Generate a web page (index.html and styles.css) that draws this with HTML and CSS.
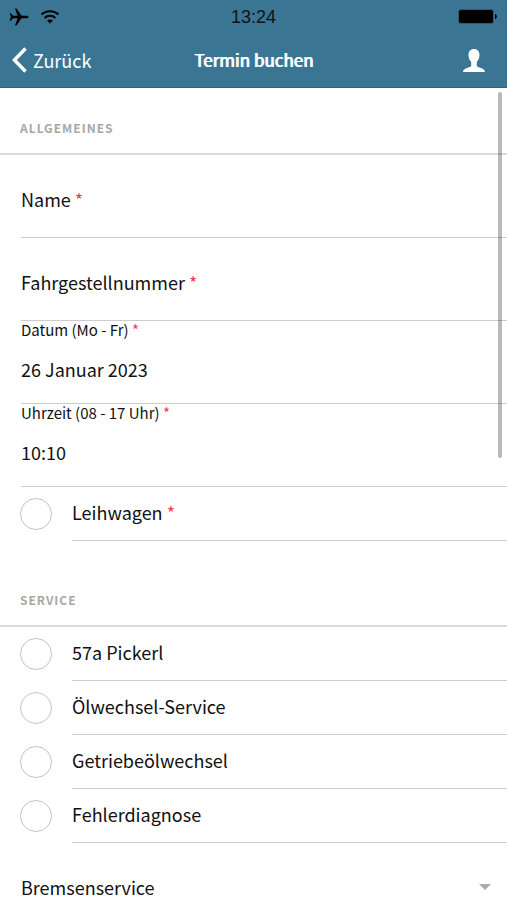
FILE: index.html
```html
<!DOCTYPE html>
<html lang="de">
<head>
    <meta charset="UTF-8">
    <meta name="viewport" content="width=device-width, initial-scale=1.0">
    <title>Termin buchen</title>
    <link rel="stylesheet" href="styles.css">
</head>
<body>
    <div class="app">
        <header class="header">
            <div class="status-bar">
                <div class="status-icons">
                    <svg width="20" height="18" viewBox="0 0 20 18"><path d="M19.5 9c0-.9-1-1.300-2-1.300h-5L7.500.6H6l2.600 7.100H4L2 5.300H.800L1.900 9 .800 12.700H2l2-2.400h4.600L6 17.400h1.500l5-7.100h5c1 0 2-.4 2-1.300z"/></svg>
                    <svg width="20" height="16" viewBox="0 0 20 16" fill="none" stroke="#000" stroke-width="2"><path d="M1.500 5.500c4.700-4.500 12.300-4.500 17 0M4.600 9c3-2.900 7.800-2.900 10.800 0"/><path d="M10 14.500l-2.800-2.800c1.600-1.500 4-1.500 5.600 0z" fill="#000" stroke="none"/></svg>
                </div>
                <span class="time">13:24</span>
                <svg class="battery" width="40" height="16" viewBox="0 0 40 16"><rect x=".5" y=".5" width="35" height="14" rx="2.500" fill="#000" stroke="#3d5763"/><path d="M37 5c2.500.6 2.500 4.400 0 5z"/></svg>
            </div>
            <nav class="nav-bar">
                <a class="back" href="#">
                    <svg width="16" height="26" viewBox="0 0 16 26" fill="none" stroke="#fff" stroke-width="3.500"><path d="M13.500 1.500L2.500 13l11 11.500"/></svg>
                    Zurück
                </a>
                <h1>Termin buchen</h1>
                <button class="profile" type="button" aria-label="Profil">
                    <svg width="22" height="23" viewBox="0 0 22 23" fill="#fff"><path d="M11 0c3.600 0 5.500 2.400 5.500 6 0 2.700-.9 5.300-2.700 6.900v3.400c0 1.200 1 1.700 2.700 2.300 2.700.9 5 1.500 5.500 4.400H0c.5-2.900 2.800-3.500 5.500-4.400 1.700-.6 2.700-1.100 2.700-2.300v-3.400C6.400 11.300 5.500 8.700 5.500 6c0-3.600 1.900-6 5.500-6z"/></svg>
                </button>
            </nav>
        </header>

        <form class="content">
            <h2>ALLGEMEINES</h2>
            <div class="field">
                <label for="name">Name <span class="required">*</span></label>
                <input id="name" type="text" required>
            </div>
            <div class="field">
                <label for="vin">Fahrgestellnummer <span class="required">*</span></label>
                <input id="vin" type="text" required>
            </div>
            <div class="field filled">
                <label for="date">Datum (Mo - Fr) <span class="required">*</span></label>
                <input id="date" type="text" value="26 Januar 2023" required>
            </div>
            <div class="field filled">
                <label for="time">Uhrzeit (08 - 17 Uhr) <span class="required">*</span></label>
                <input id="time" type="text" value="10:10" required>
            </div>
            <div class="check-row">
                <input id="rental" type="checkbox">
                <label for="rental">Leihwagen <span class="required">*</span></label>
            </div>

            <h2 class="spaced">SERVICE</h2>
            <div class="check-row">
                <input id="pickerl" type="checkbox">
                <label for="pickerl">57a Pickerl</label>
            </div>
            <div class="check-row">
                <input id="oil" type="checkbox">
                <label for="oil">Ölwechsel-Service</label>
            </div>
            <div class="check-row">
                <input id="gear-oil" type="checkbox">
                <label for="gear-oil">Getriebeölwechsel</label>
            </div>
            <div class="check-row">
                <input id="diagnosis" type="checkbox">
                <label for="diagnosis">Fehlerdiagnose</label>
            </div>
            <div class="select-row">
                <select aria-label="Bremsenservice">
                    <option>Bremsenservice</option>
                </select>
                <span class="arrow"></span>
            </div>
        </form>
        <div class="scroll-thumb"></div>
    </div>
</body>
</html>
```
FILE: styles.css
```css
* {
    box-sizing: border-box;
}
body {
    font-family: "Noto Sans CJK SC", "Noto Sans", sans-serif;
    font-size: 18px;
    margin: 0;
    background: #fff;
    color: #111;
}
.app {
    position: relative;
    display: flex;
    flex-direction: column;
    height: 100vh;
    overflow: hidden;
}

/* header */
.header {
    flex: none;
    background: #3a7694;
    border-bottom: 1px solid #2f627c;
    color: #fff;
}
.status-bar,
.nav-bar {
    display: grid;
    grid-template-columns: 1fr auto 1fr;
    align-items: center;
}
.status-bar {
    height: 34px;
    padding: 0 9px;
}
.status-icons {
    display: flex;
    align-items: center;
    gap: 11px;
}
.time {
    font-family: "Liberation Sans", Arial, sans-serif;
    color: #111;
}
.battery {
    justify-self: end;
}
.nav-bar {
    height: 53px;
    padding: 0 12px 2px;
}
.back {
    display: flex;
    align-items: center;
    gap: 5px;
    color: #fff;
    text-decoration: none;
}
h1 {
    margin: 0;
    font-size: 17px;
    font-weight: normal;
    text-shadow: 1px 0 currentColor;
}
.profile {
    display: flex;
    justify-self: end;
    padding: 2px 0 0;
    margin-right: 10px;
    border: 0;
    background: none;
}

/* form */
.content {
    flex: 1;
    min-height: 0;
    overflow: hidden;
}
h2 {
    margin: 0;
    padding: 31px 20px 16px;
    border-bottom: 2px solid #dcdcdc;
    font-size: 12px;
    line-height: 18px;
    font-weight: bold;
    letter-spacing: 1px;
    color: #a8a8a8;
}
h2.spaced {
    margin-top: 19px;
}
input,
select {
    font: inherit;
    color: inherit;
    border: 0;
    outline: 0;
    background: none;
    padding: 0;
    margin: 0;
}
.field {
    display: flex;
    align-items: center;
    height: 83px;
    margin-left: 21px;
    padding-top: 6px;
    border-bottom: 1px solid #ccc;
}
.field label {
    flex: none;
}
.field input {
    flex: 1;
    min-width: 0;
}
.filled {
    flex-direction: column;
    align-items: stretch;
    padding-top: 0;
}
.filled label {
    font-size: 15px;
    line-height: 18px;
}
.filled input {
    flex: none;
    height: 60px;
}
.required {
    color: #f0404e;
}
.check-row {
    display: flex;
    align-items: center;
    gap: 20px;
    height: 54px;
    padding-left: 20px;
}
.check-row input {
    appearance: none;
    flex: none;
    width: 32px;
    height: 32px;
    border: 1px solid #c4c4c4;
    border-radius: 50%;
}
.check-row label {
    flex: 1;
    height: 54px;
    line-height: 50px;
    border-bottom: 1px solid #ccc;
}
.select-row {
    display: flex;
    align-items: center;
    height: 83px;
    padding: 4px 16px 0 21px;
}
.select-row select {
    appearance: none;
    flex: 1;
}
.arrow {
    border: 6px solid transparent;
    border-top-color: #aaa;
    border-bottom: 0;
}

.scroll-thumb {
    position: absolute;
    top: 92px;
    right: 5px;
    width: 4px;
    height: 366px;
    border-radius: 2px;
    background: rgba(0, 0, 0, 0.27);
}
```
